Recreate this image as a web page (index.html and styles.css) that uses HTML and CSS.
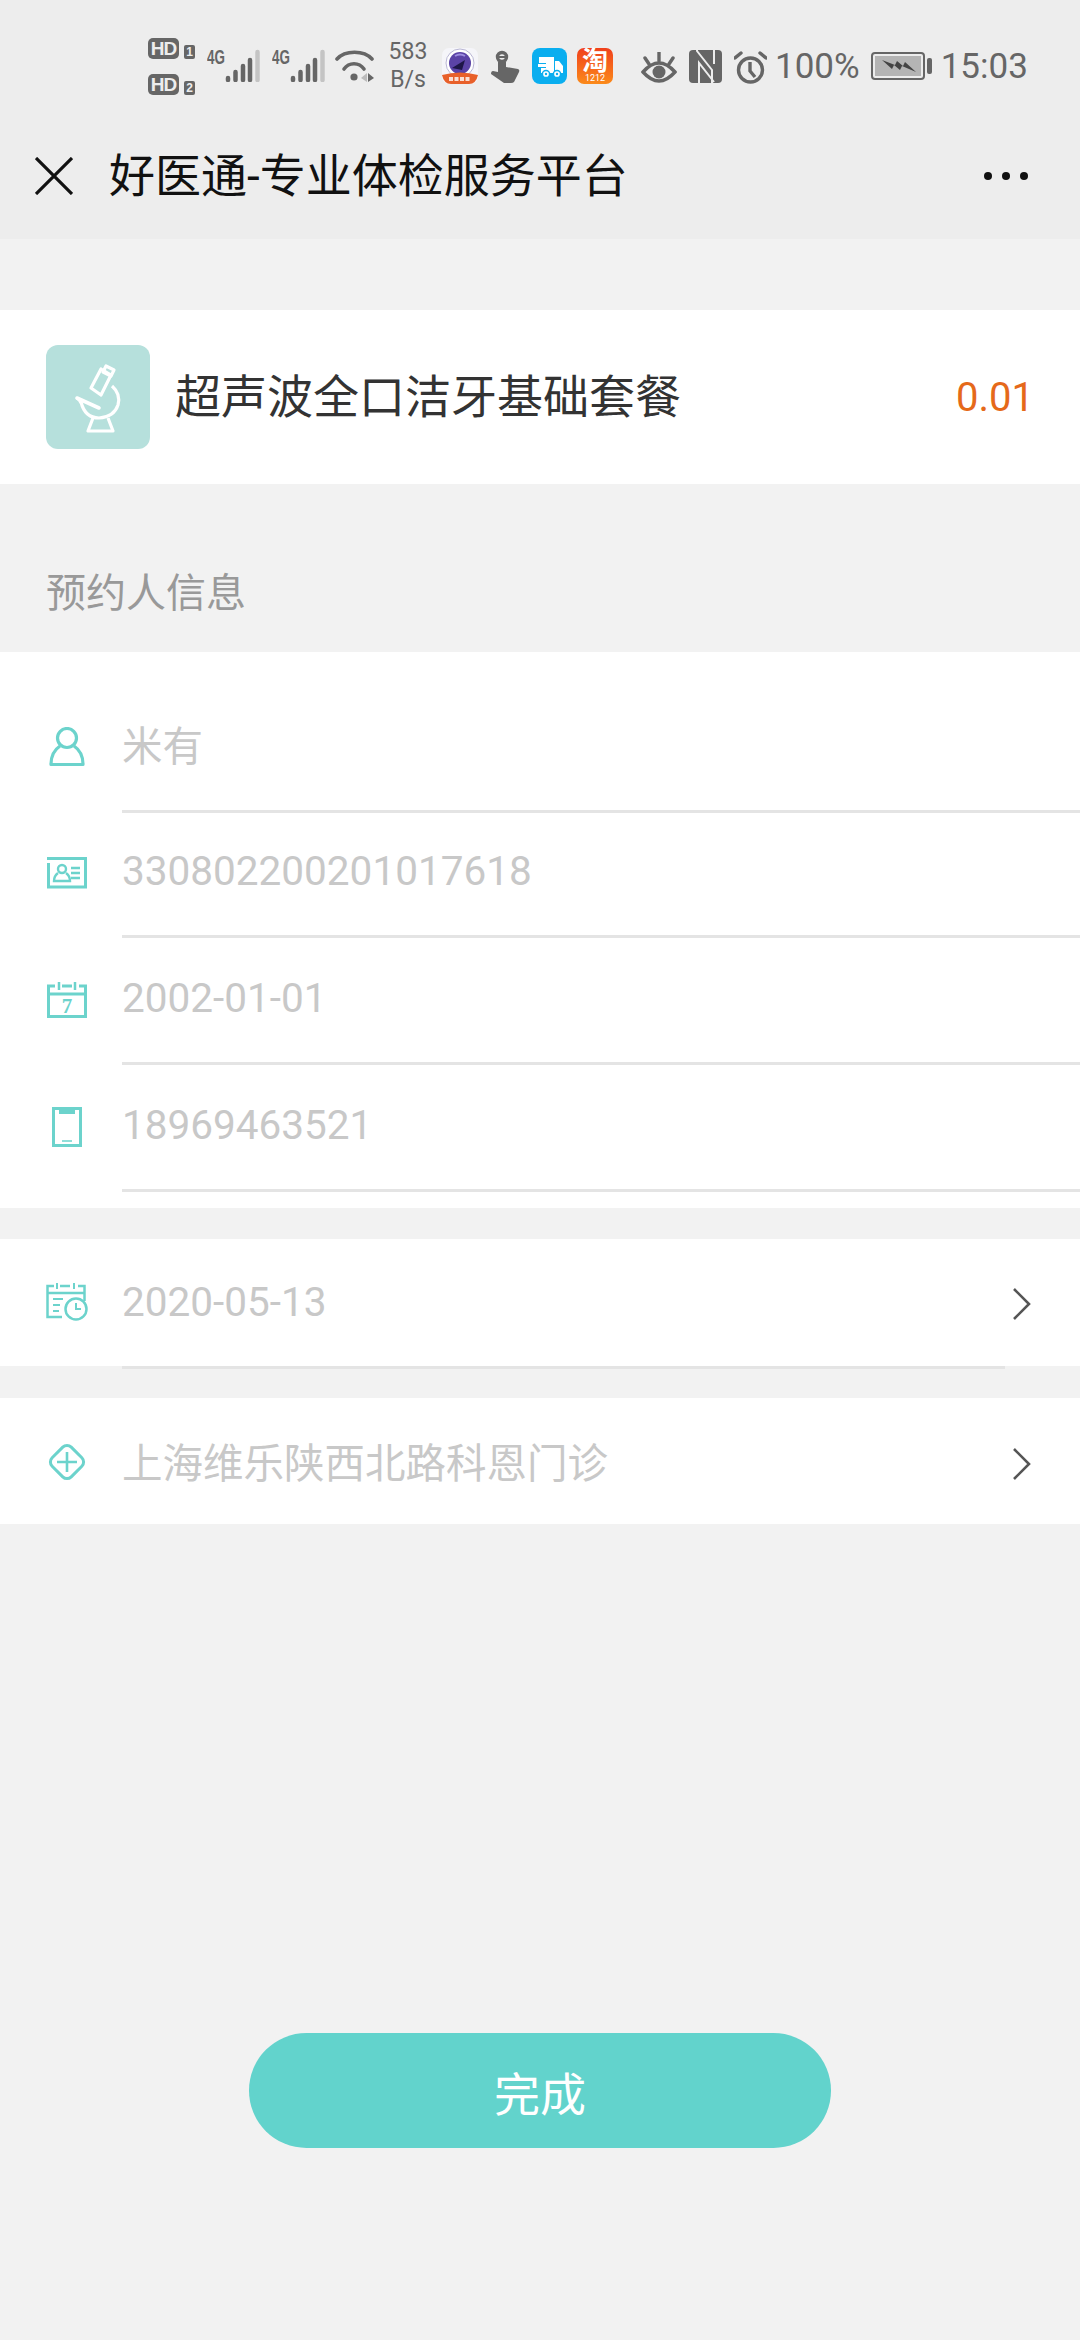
FILE: index.html
```html
<!DOCTYPE html>
<html>
<head>
    <meta charset="utf-8">
    <title>好医通-专业体检服务平台</title>
    <link rel="stylesheet" href="styles.css">
</head>

<body>

    <!-- 顶部 -->
    <header class="top">
        <div class="status">
            <div class="hd">
                <div class="hd-line"><span class="hd-tag">HD</span><span class="hd-num">1</span></div>
                <div class="hd-line"><span class="hd-tag">HD</span><span class="hd-num">2</span></div>
            </div>
            <div class="sig">
                <span class="sig-txt">4G</span>
                <svg width="35" height="33" viewBox="0 0 35 33"><g fill="none" stroke-width="4.500" stroke-linecap="round"><path d="M3 31v-2M10.500 31v-8M18 31v-14M25 31v-20" stroke="#666"/><path d="M32.500 31V3" stroke="#c4c4c4"/></g></svg>
            </div>
            <div class="sig">
                <span class="sig-txt">4G</span>
                <svg width="35" height="33" viewBox="0 0 35 33"><g fill="none" stroke-width="4.500" stroke-linecap="round"><path d="M3 31v-2M10.500 31v-8M18 31v-14M25 31v-20" stroke="#666"/><path d="M32.500 31V3" stroke="#c4c4c4"/></g></svg>
            </div>
            <svg class="wifi" width="40" height="33" viewBox="0 0 40 33"><g fill="none" stroke="#666" stroke-width="3.600" stroke-linecap="round"><path d="M2 9C10 0 29 0 37 9"/><path d="M9 19C14 12 24 12 29 19"/></g><circle cx="19" cy="27" r="3.600" fill="#666"/><path d="M26 28l6-5v9z" fill="#bbb"/><path d="M33 23l6 5-6 4z" fill="#666"/></svg>
            <div class="speed"><span>583</span><span>B/s</span></div>
            <svg class="app cam" width="36" height="36" viewBox="0 0 36 36"><rect width="36" height="36" rx="7" fill="#f5f5f9"/><circle cx="18" cy="15" r="14" fill="#fff" stroke="#b9b6d4" stroke-width="1"/><circle cx="18" cy="15" r="11" fill="#5b43a6"/><path d="M10 20l13-8-3 10z" fill="#1e1648"/><path d="M13 8q5-3 10 0" fill="none" stroke="#9d8ee0" stroke-width="2"/><path d="M0 27q18-5 36 0q-2 9-9 9H9q-7 0-9-9z" fill="#e8602a"/><path d="M7 31h22" stroke="#fff" stroke-width="4" stroke-dasharray="4 1.500" opacity=".8"/></svg>
            <svg class="hand" width="29" height="34" viewBox="0 0 29 34"><circle cx="11" cy="7" r="4.500" fill="none" stroke="#666" stroke-width="3.400"/><path d="M5 7h12" stroke="#666" stroke-width="2"/><path d="M7 12h8v5l12 2q2 1 1 3l-5 10q-1 1-3 1h-7L0 24q0-3 2-3l5 1z" fill="#666"/></svg>
            <svg class="app" width="35" height="36" viewBox="0 0 35 36"><rect width="35" height="36" rx="8" fill="#0aaeef"/><path d="M7 9h15v16H9V20h5v-1H6v-3h8v-1H7z" fill="#fff"/><path d="M23 13h4l4 5v7h-8z" fill="#fff"/><circle cx="14" cy="26" r="3.600" fill="#fff" stroke="#0aaeef" stroke-width="1.500"/><circle cx="25" cy="26" r="3.600" fill="#fff" stroke="#0aaeef" stroke-width="1.500"/><circle cx="14" cy="26" r="1.200" fill="#0aaeef"/><circle cx="25" cy="26" r="1.200" fill="#0aaeef"/></svg>
            <div class="taobao"><span class="tb-main">淘</span><span class="tb-sub">1212</span></div>
            <svg class="eye" width="36" height="32" viewBox="0 0 36 32"><g fill="none" stroke="#666" stroke-width="3.400"><path d="M2 20Q18 2 34 20Q18 38 2 20z"/><path d="M18 9V0M8 12L4 6M28 12l4-6" stroke-linecap="round"/></g><circle cx="18" cy="20" r="6.500" fill="#666"/></svg>
            <svg class="nfc" width="33" height="33" viewBox="0 0 33 33"><rect width="33" height="33" rx="4" fill="#666"/><g fill="none" stroke="#ededed" stroke-width="2"><path d="M8 0v1l15 19v13"/><path d="M10 33V13l15 19"/><path d="M25 0v14"/></g></svg>
            <svg class="alarm" width="33" height="34" viewBox="0 0 33 34"><g fill="none" stroke="#666" stroke-width="3.400"><circle cx="16.500" cy="20" r="12"/><path d="M16 12v9l5 6"/><path d="M1 8l6-5M32 8l-6-5" stroke-linecap="round"/></g></svg>
            <span class="pct">100%</span>
            <div class="batt"><div class="batt-box"><svg width="46" height="20" viewBox="0 0 46 20"><path d="M7 4l13 5 2-4 6 5 2-4 11 10-14-6-2 4-6-5-2 4z" fill="#444"/></svg></div><span class="batt-nub"></span></div>
            <span class="clock">15:03</span>
        </div>
        <div class="nav">
            <svg class="nav-close" width="38" height="38" viewBox="0 0 38 38"><path d="M1 1l36 36M37 1L1 37" stroke="#111" stroke-width="3.200" fill="none"/></svg>
            <h1 class="nav-title">好医通-专业体检服务平台</h1>
            <div class="nav-more"><i></i><i></i><i></i></div>
        </div>
    </header>

    <!-- 套餐 -->
    <section class="goods">
        <div class="goods-pic">
            <svg width="104" height="104" viewBox="0 0 104 104"><g fill="none" stroke="#fff" stroke-width="3.200" stroke-linejoin="round"><path d="M55 24l10 6-10 20-10-7z"/><path d="M60 21l8 4-3 6-8-4z"/><path d="M66 41q9 8 6 19-4 12-19 13-14 0-18-16"/><path d="M31 53l22 10" stroke-width="3.600" stroke-linecap="round"/><path d="M31 53q3 2 4 5"/><path d="M47 73l-5 13h25l-5-13"/></g></svg>
        </div>
        <div class="goods-name">超声波全口洁牙基础套餐</div>
        <div class="goods-price">0.01</div>
    </section>

    <div class="label">预约人信息</div>

    <!-- 预约人 -->
    <section class="form">
        <div class="row">
            <svg class="ico" width="36" height="40" viewBox="0 0 36 40"><g fill="none" stroke="#6cd3cc" stroke-width="3.200" stroke-linejoin="round"><circle cx="18" cy="11" r="9.500"/><path d="M11 19Q2 25 2 37.500h32Q34 25 25 19"/></g></svg>
            <div class="val val-name">米有</div>
        </div>
        <div class="row">
            <svg class="ico" width="40" height="32" viewBox="0 0 40 32"><g fill="none" stroke="#6cd3cc"><path d="M0 1.500h40M1.500 6v24h37V1.500" stroke-width="3"/><circle cx="15" cy="12" r="4" stroke-width="2.400"/><path d="M11 16q-4 3-4 8h16q0-5-4-8M24 11h9M24 16h9M24 21h9" stroke-width="2.400"/></g></svg>
            <div class="val">330802200201017618</div>
        </div>
        <div class="row">
            <svg class="ico" width="40" height="36" viewBox="0 0 40 36"><g fill="none" stroke="#6cd3cc" stroke-width="3"><path d="M8 4H1.500v30.500h37V4H32M1.500 12h37M15 4h10"/><path d="M12 0v8M28 0v8" stroke-width="2.500"/></g><text x="20" y="31" class="ico-num">7</text></svg>
            <div class="val">2002-01-01</div>
        </div>
        <div class="row">
            <svg class="ico" width="30" height="40" viewBox="0 0 30 40"><g fill="none" stroke="#6cd3cc"><rect x="1.500" y="1.500" width="27" height="37" stroke-width="3"/><path d="M10 34h10" stroke-width="1.500"/></g><path d="M7 2h16v5H7z" fill="#6cd3cc"/></svg>
            <div class="val">18969463521</div>
        </div>
    </section>

    <section class="pick pick-date">
        <div class="row row-short">
            <svg class="ico" width="42" height="38" viewBox="0 0 42 38"><g fill="none" stroke="#6cd3cc" stroke-width="2.500"><path d="M8 3H1.500v31H16M1.500 10h37V3H32M14 3h10M38.500 10v8"/><path d="M11 0v6M28 0v6M7 16h10M7 22h7M7 28h6" stroke-width="2"/><circle cx="30" cy="26" r="10.500" stroke-width="2.500"/><path d="M30 20v6h5" stroke-width="2"/></g></svg>
            <div class="val">2020-05-13</div>
            <svg class="arrow" width="18" height="32" viewBox="0 0 18 32"><path d="M1 1l15 15L1 31" fill="none" stroke="#555" stroke-width="2.600"/></svg>
        </div>
    </section>

    <section class="pick pick-clinic">
        <div class="row row-none">
            <svg class="ico" width="42" height="42" viewBox="0 0 42 42"><g fill="none" stroke="#6cd3cc" stroke-width="3"><rect x="7.500" y="7.500" width="27" height="27" rx="6" transform="rotate(45 21 21)"/><path d="M11 21h20M21 11v20" stroke-width="2.600"/></g></svg>
            <div class="val">上海维乐陕西北路科恩门诊</div>
            <svg class="arrow" width="18" height="32" viewBox="0 0 18 32"><path d="M1 1l15 15L1 31" fill="none" stroke="#555" stroke-width="2.600"/></svg>
        </div>
    </section>

    <div class="foot">
        <button class="done">完成</button>
    </div>

</body>
</html>
```

FILE: styles.css
```css
*{box-sizing:border-box;margin:0;}
body{margin:0;width:1080px;height:2340px;background:#f2f2f2;font-family:Roboto,"Noto Sans CJK SC",sans-serif;overflow:hidden;}

/* 顶部 */
.top{height:239px;background:#ededed;}
.status{height:122px;padding:38px 0 0 148px;display:flex;align-items:flex-start;color:#666;}
.status svg{display:block;flex:none;}

.hd{width:47px;display:flex;flex-direction:column;gap:15px;}
.hd-line{height:21px;display:flex;justify-content:space-between;align-items:flex-end;}
.hd-tag{width:31px;height:21px;border-radius:5px;background:#666;color:#ededed;font:700 19px/21px "Liberation Sans",sans-serif;text-align:center;letter-spacing:-1px;}
.hd-num{width:11px;height:14px;border-radius:2px;background:#666;color:#ededed;font:700 12px/14px "Liberation Sans",sans-serif;text-align:center;}

.sig{width:53px;height:33px;margin-left:12px;margin-top:11px;display:flex;justify-content:space-between;align-items:flex-start;}
.sig-txt{width:18px;font:700 21px/16px "Liberation Sans",sans-serif;transform:scaleX(.64);transform-origin:left;white-space:nowrap;}
.wifi{margin:12px 0 0 10px;}
.speed{width:38px;margin:0 0 0 14px;display:flex;flex-direction:column;align-items:center;font-size:23px;line-height:28px;white-space:nowrap;}
.app{margin-top:10px;}
.cam{margin-left:15px;}
.hand{margin:12px 0 0 13px;}
.hand + .app{margin-left:12px;}
.taobao{width:36px;height:36px;margin:10px 0 0 10px;border-radius:7px;background:linear-gradient(#f0401c,#fb8a1a);color:#fff;display:flex;flex-direction:column;align-items:center;}
.tb-main{font-size:26px;line-height:26px;font-weight:700;}
.tb-sub{font-size:9px;line-height:9px;}
.eye{margin:14px 0 0 28px;}
.nfc{margin:12px 0 0 12px;}
.alarm{margin:12px 0 0 12px;}
.pct{margin:7px 0 0 8px;font-size:35px;line-height:44px;}
.batt{margin:14px 0 0 11px;display:flex;align-items:center;gap:2px;}
.batt-box{width:54px;height:28px;border:2px solid #666;border-radius:4px;padding:2px;background:#ededed;}
.batt-box svg{background:#b4b4b4;}
.batt-nub{width:5px;height:16px;border-radius:2px;background:#666;}
.clock{margin:7px 0 0 9px;font-size:35px;line-height:44px;}

.nav{height:117px;padding:0 52px 0 35px;display:flex;align-items:center;}
.nav-close{flex:none;margin-top:-10px;}
.nav-title{flex:1;margin:-10px 0 0 36px;font-size:46px;line-height:60px;font-weight:400;color:#111;white-space:nowrap;}
.nav-more{display:flex;gap:10px;margin-top:-10px;}
.nav-more i{width:8px;height:8px;border-radius:50%;background:#111;}

/* 套餐 */
.goods{height:174px;margin-top:71px;padding:0 46px 0 46px;background:#fff;display:flex;align-items:center;}
.goods-pic{width:104px;height:104px;border-radius:12px;background:#b6e0dc;flex:none;}
.goods-pic svg{display:block;}
.goods-name{flex:1;margin:-8px 0 0 25px;font-size:46px;color:#333;white-space:nowrap;}
.goods-price{font-size:40px;color:#e5691a;}

.label{height:168px;padding:88px 0 0 46px;font-size:40px;line-height:44px;color:#999;}

/* 表单 */
.form{height:556px;padding-top:32px;background:#fff;}
.row{height:127px;padding-left:46px;display:grid;grid-template-columns:42px 34px 1fr auto;align-items:center;}
.ico{grid-column:1;justify-self:center;margin-bottom:4px;}
.ico-num{font:700 21px "Liberation Serif",serif;fill:#6cd3cc;text-anchor:middle;}
.val{grid-column:3;align-self:stretch;font-size:40.5px;line-height:120px;color:#c8c8c8;border-bottom:3px solid #e4e4e4;white-space:nowrap;}
.val-name{line-height:126px;}

.pick{height:127px;background:#fff;}
.pick-date{margin-top:31px;}
.pick-clinic{height:126px;margin-top:32px;}
.row-short{height:130px;}
.row-short .val{line-height:127px;}
.row-none{height:126px;}
.row-none .val{border-bottom:none;line-height:132px;}
.arrow{grid-column:4;margin:0 49px 0 8px;}

.foot{padding-top:509px;display:flex;justify-content:center;}
.done{width:582px;height:115px;border:none;border-radius:58px;background:#62d3cc;color:#fff;font:46px "Noto Sans CJK SC",sans-serif;}
```
